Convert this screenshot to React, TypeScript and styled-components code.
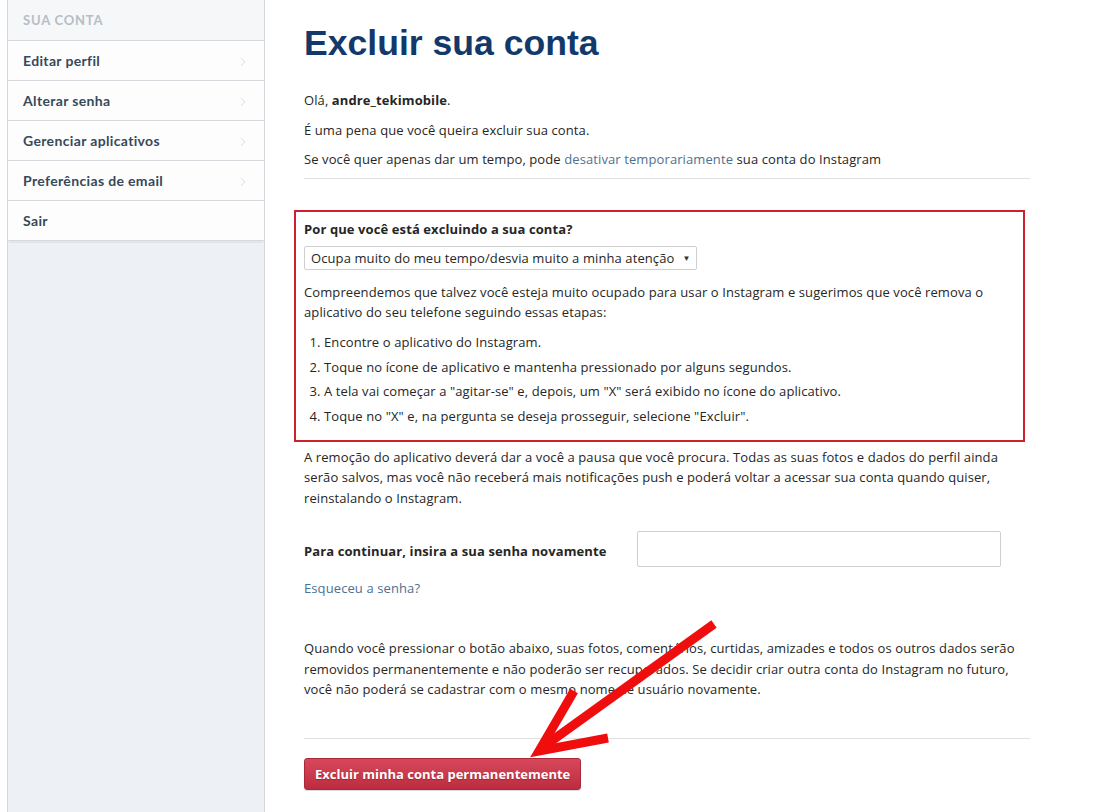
import styled, { createGlobalStyle } from 'styled-components';
import { ChevronRight } from 'lucide-react';

const GlobalStyle = createGlobalStyle`
  html, body {
    margin: 0;
    padding: 0;
    background: #fff;
  }

  body {
    font-family: "Open Sans", "Noto Sans", sans-serif;
    color: #262626;
  }
`;

const Page = styled.div`
  position: relative;
  display: flex;
  min-height: 812px;
  overflow: hidden;
`;

const Sidebar = styled.aside`
  flex: 0 0 256px;
  margin-left: 7px;
  border-left: 1px solid #d3d7dc;
  border-right: 1px solid #d3d7dc;
  background: #edf0f4;
`;

const SideHeader = styled.div`
  height: 40px;
  display: flex;
  align-items: center;
  padding-left: 15px;
  background: #f6f7f8;
  border-bottom: 1px solid #d6d9dd;
  font-family: Lato, "Open Sans", sans-serif;
  font-size: 13px;
  font-weight: 700;
  letter-spacing: 0.8px;
  color: #b5bec7;
  text-transform: uppercase;
`;

const SideNav = styled.nav`
  display: flex;
  flex-direction: column;
  background: #fdfdfd;
  border-bottom: 1px solid #d6d9dd;
  box-shadow: 0 3px 0 -1px #e2e6eb;
`;

const NavItem = styled.a`
  height: 39px;
  display: flex;
  align-items: center;
  justify-content: space-between;
  padding: 0 14px 0 15px;
  border-bottom: 1px solid #d6d9dd;
  font-family: Lato, "Open Sans", sans-serif;
  font-size: 14px;
  font-weight: 700;
  letter-spacing: 0.35px;
  color: #36495b;
  text-decoration: none;

  &:last-child {
    border-bottom: none;
  }

  svg {
    color: #d0d4d8;
    margin-top: 2px;
  }
`;

const Main = styled.main`
  width: 726px;
  padding: 21px 0 0 39px;
  font-size: 13px;
  line-height: 20px;
  letter-spacing: 0.1px;
`;

const Title = styled.h1`
  margin: 0 0 25px;
  font-family: "Liberation Sans", Arial, sans-serif;
  font-size: 35.6px;
  line-height: 44px;
  font-weight: 700;
  letter-spacing: 0;
  color: #12396a;
`;

const Text = styled.p<{ $gap?: number }>`
  margin: 0 0 ${(p) => p.$gap ?? 10}px;
`;

const LooseText = styled(Text)`
  line-height: 20.5px;
`;

const InlineLink = styled.a`
  color: #4d7192;
  text-decoration: none;
`;

const Divider = styled.hr<{ $after: number }>`
  margin: 0 0 ${(p) => p.$after}px;
  border: none;
  border-top: 1px solid #e0e0e0;
`;

const ReasonBox = styled.section`
  margin: 0 5px 5px -10px;
  padding: 7px 10px 14px 8px;
  border: 2px solid #cf1f2e;
`;

const Question = styled.div`
  font-weight: 700;
  margin-bottom: 7px;
`;

const SelectBox = styled.div`
  display: flex;
  align-items: center;
  gap: 8px;
  width: fit-content;
  height: 24px;
  box-sizing: border-box;
  padding: 0 6px;
  border: 1px solid #cfcfcf;
  border-radius: 2px;
  background: #fff;
  margin-bottom: 12px;
  cursor: default;
`;

const Caret = styled.span`
  font-size: 8px;
  color: #333;
`;

const Steps = styled.ol`
  margin: 10px 0 0;
  padding-left: 20px;

  li {
    margin-bottom: 4.6px;
  }

  li:last-child {
    margin-bottom: 0;
  }
`;

const PasswordRow = styled.div`
  display: flex;
  align-items: center;
  margin: 23px 0 11px;
`;

const PasswordLabel = styled.label`
  width: 333px;
  padding-top: 3px;
  font-weight: 700;
`;

const PasswordInput = styled.input`
  width: 364px;
  height: 36px;
  box-sizing: border-box;
  border: 1px solid #cfcfcf;
  border-radius: 2px;
  padding: 0 10px;
  font: inherit;
`;

const DangerButton = styled.button`
  height: 32px;
  padding: 0 10px;
  border: 1px solid #a9283a;
  border-radius: 3px;
  background: linear-gradient(#d8485b, #bd2b3e);
  box-shadow: 0 1px 1px rgba(0, 0, 0, 0.15);
  color: #fff;
  font-family: "Open Sans", sans-serif;
  font-size: 13px;
  font-weight: 700;
  text-shadow: 0 1px 1px rgba(0, 0, 0, 0.25);
  cursor: pointer;
`;

const Arrow = styled.svg`
  position: absolute;
  left: 0;
  top: 0;
  pointer-events: none;
`;

const navItems = [
  { label: 'Editar perfil', chevron: true },
  { label: 'Alterar senha', chevron: true },
  { label: 'Gerenciar aplicativos', chevron: true },
  { label: 'Preferências de email', chevron: true },
  { label: 'Sair', chevron: false },
];

const steps = [
  'Encontre o aplicativo do Instagram.',
  'Toque no ícone de aplicativo e mantenha pressionado por alguns segundos.',
  'A tela vai começar a "agitar-se" e, depois, um "X" será exibido no ícone do aplicativo.',
  'Toque no "X" e, na pergunta se deseja prosseguir, selecione "Excluir".',
];

const App = () => {
  return (
    <>
      <GlobalStyle />
      <Page>
        <Sidebar>
          <SideHeader>Sua conta</SideHeader>
          <SideNav>
            {navItems.map((item) => (
              <NavItem key={item.label} href="#">
                {item.label}
                {item.chevron && <ChevronRight size={14} strokeWidth={1.5} />}
              </NavItem>
            ))}
          </SideNav>
        </Sidebar>

        <Main>
          <Title>Excluir sua conta</Title>
          <Text>
            Olá, <b>andre_tekimobile</b>.
          </Text>
          <Text $gap={9}>É uma pena que você queira excluir sua conta.</Text>
          <Text $gap={9}>
            Se você quer apenas dar um tempo, pode{' '}
            <InlineLink href="#">desativar temporariamente</InlineLink> sua conta do Instagram
          </Text>
          <Divider $after={31} />

          <ReasonBox>
            <Question>Por que você está excluindo a sua conta?</Question>
            <SelectBox>
              <span>Ocupa muito do meu tempo/desvia muito a minha atenção</span>
              <Caret>▼</Caret>
            </SelectBox>
            <Text $gap={0}>
              Compreendemos que talvez você esteja muito ocupado para usar o Instagram e sugerimos
              que você remova o aplicativo do seu telefone seguindo essas etapas:
            </Text>
            <Steps>
              {steps.map((step) => (
                <li key={step}>{step}</li>
              ))}
            </Steps>
          </ReasonBox>

          <LooseText $gap={0}>
            A remoção do aplicativo deverá dar a você a pausa que você procura. Todas as suas fotos
            e dados do perfil ainda
            <br />
            serão salvos, mas você não receberá mais notificações push e poderá voltar a acessar
            sua conta quando quiser,
            <br />
            reinstalando o Instagram.
          </LooseText>

          <PasswordRow>
            <PasswordLabel htmlFor="password">Para continuar, insira a sua senha novamente</PasswordLabel>
            <PasswordInput id="password" type="password" />
          </PasswordRow>
          <InlineLink href="#">Esqueceu a senha?</InlineLink>

          <LooseText $gap={38} style={{ marginTop: 40 }}>
            Quando você pressionar o botão abaixo, suas fotos, comentários, curtidas, amizades e
            todos os outros dados serão
            <br />
            removidos permanentemente e não poderão ser recuperados. Se decidir criar outra conta
            do Instagram no futuro,
            <br />
            você não poderá se cadastrar com o mesmo nome de usuário novamente.
          </LooseText>
          <Divider $after={19} />
          <DangerButton type="button">Excluir minha conta permanentemente</DangerButton>
        </Main>

        <Arrow width="1099" height="812" viewBox="0 0 1099 812">
          <g fill="none" stroke="#f00d0d" strokeWidth="9" strokeLinejoin="miter" strokeMiterlimit="10">
            <path d="M714 624 L543 747" />
            <path d="M574 691 L539 751 L608 738" />
          </g>
        </Arrow>
      </Page>
    </>
  );
};

export default App;
